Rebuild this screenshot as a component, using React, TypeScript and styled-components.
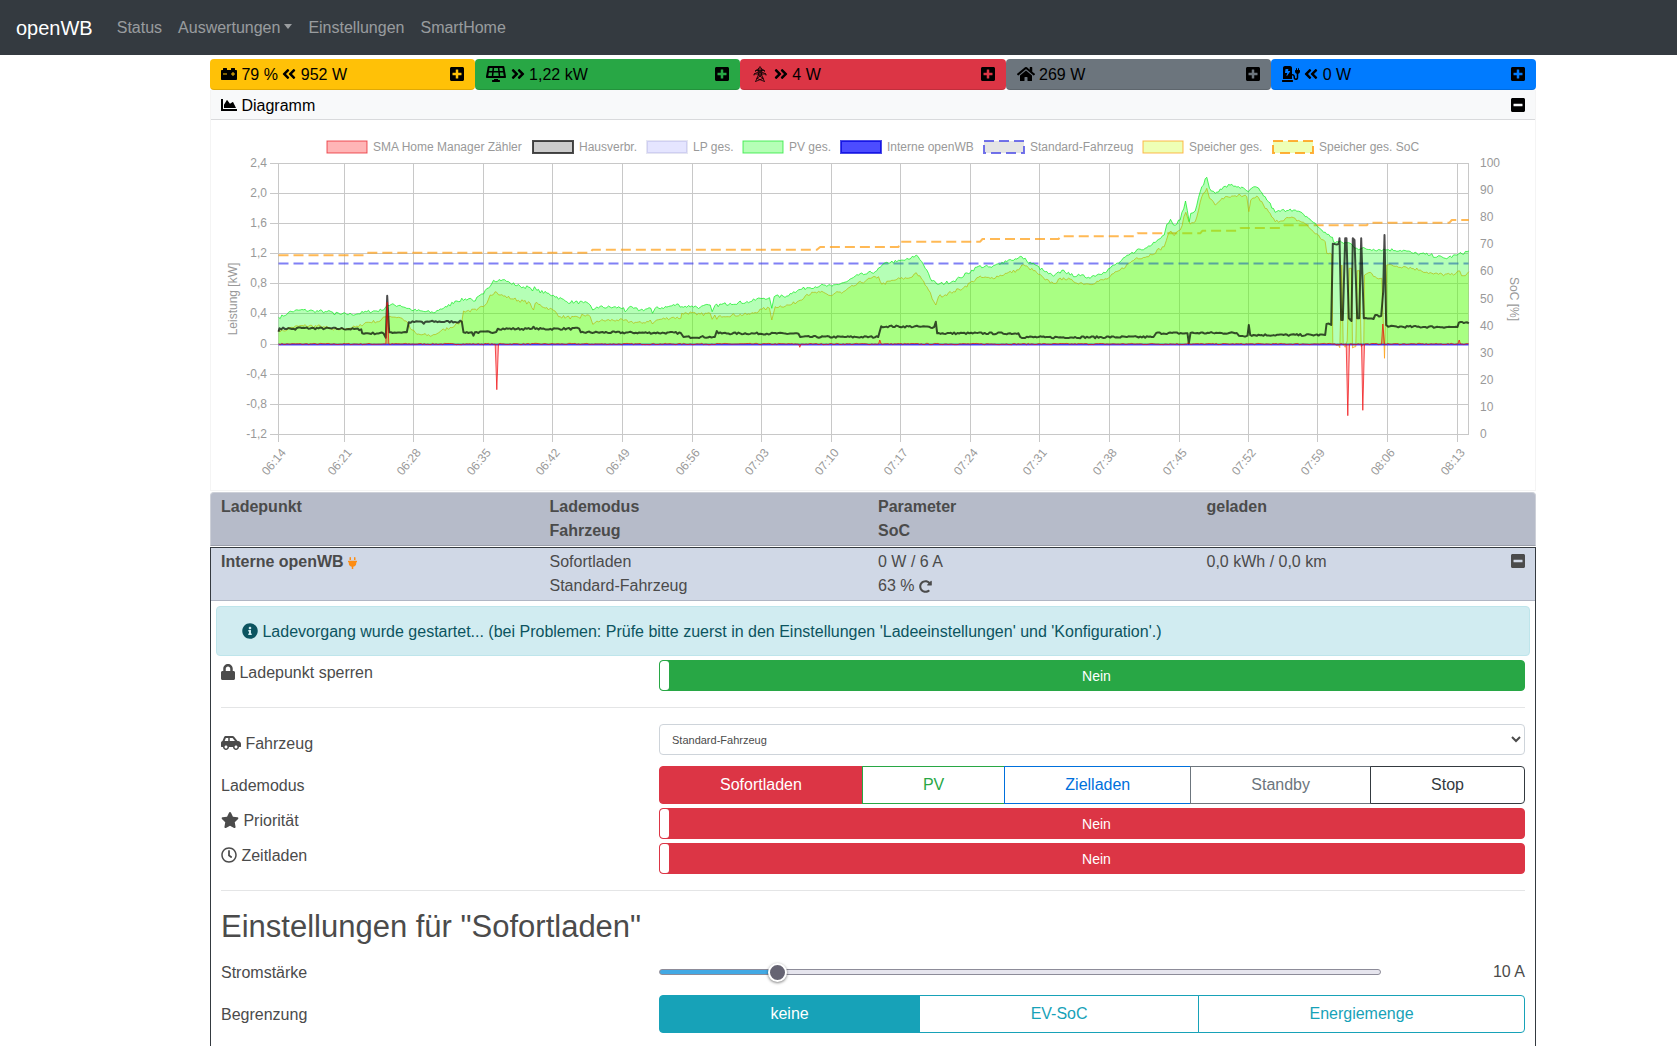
import React, { useId, useState } from "react";
import styled, { createGlobalStyle } from "styled-components";
import type { IconType } from "react-icons";
import {
  FaAngleDoubleLeft,
  FaAngleDoubleRight,
  FaCarBattery,
  FaCarSide,
  FaChargingStation,
  FaChartArea,
  FaHome,
  FaInfoCircle,
  FaLock,
  FaMinusSquare,
  FaPlug,
  FaPlusSquare,
  FaRedoAlt,
  FaRegClock,
  FaSolarPanel,
  FaStar,
} from "react-icons/fa";

const GlobalStyle = createGlobalStyle`
  *, *::before, *::after { box-sizing: border-box; }
  body {
    margin: 0;
    background: #fff;
    color: #4b4b4b;
    font: 16px/24px "Liberation Sans", Arial, sans-serif;
  }
  button, input, select { font: inherit; color: inherit; }
`;

const glyph = (icon: IconType, width: number, height = 16) => styled(icon)`
  width: ${width}px;
  height: ${height}px;
  vertical-align: -2px;
`;

const BatteryIcon = glyph(FaCarBattery, 16);
const SolarIcon = glyph(FaSolarPanel, 20);
const LeftIcon = glyph(FaAngleDoubleLeft, 14);
const RightIcon = glyph(FaAngleDoubleRight, 14);
const HomeIcon = glyph(FaHome, 18);
const StationIcon = glyph(FaChargingStation, 18);
const PlusIcon = glyph(FaPlusSquare, 14);
const MinusIcon = glyph(FaMinusSquare, 14);
const AreaIcon = glyph(FaChartArea, 16);
const InfoIcon = glyph(FaInfoCircle, 16);
const LockIcon = glyph(FaLock, 14);
const CarIcon = glyph(FaCarSide, 20);
const StarIcon = glyph(FaStar, 18);
const ClockIcon = glyph(FaRegClock, 16);
const PlugIcon = glyph(FaPlug, 9, 12);
const ReloadIcon = glyph(FaRedoAlt, 13, 13);

const Page = styled.div`
  display: flex;
  flex-direction: column;
  min-height: 100vh;
`;

const Navbar = styled.nav`
  display: flex;
  align-items: center;
  gap: 16px;
  height: 55px;
  padding: 0 16px;
  background: #343a40;
`;

const Brand = styled.a`
  margin-right: 8px;
  color: #fff;
  font-size: 20px;
  line-height: 30px;
  text-decoration: none;
`;

const NavLink = styled.a`
  color: rgba(255, 255, 255, 0.5);
  text-decoration: none;
`;

const NavMenu = styled.button`
  padding: 0;
  border: 0;
  background: none;
  color: rgba(255, 255, 255, 0.5);

  &::after {
    content: "";
    display: inline-block;
    margin-left: 4px;
    vertical-align: 4px;
    border: 4px solid transparent;
    border-top: 5px solid currentColor;
    border-bottom: 0;
  }
`;

const Main = styled.main`
  display: flex;
  flex-direction: column;
  flex: 1;
  padding: 4px 141px 0 210px;
`;

const Summary = styled.div`
  display: grid;
  grid-template-columns: repeat(5, 1fr);
`;

const Tile = styled.section<{ $color: string }>`
  display: flex;
  justify-content: space-between;
  padding: 3px 10px 2px;
  border: 1px solid transparent;
  border-bottom-color: rgba(0, 0, 0, 0.12);
  border-radius: 4px;
  background: ${(p) => p.$color};
  color: #000;
`;

const IconButton = styled.button`
  display: block;
  height: 24px;
  padding: 0;
  border: 0;
  background: none;
`;

const ChartCard = styled.section`
  margin-bottom: 1px;
  border: 1px solid #f4f4f4;
  border-top: 0;
`;

const ChartHeader = styled.header`
  display: flex;
  justify-content: space-between;
  padding: 4px 10px 1px;
  border-bottom: 1px solid #d9dadc;
  background: #f8f9fa;
  color: #000;
`;

const ChartSvg = styled.svg`
  display: block;
  width: 100%;
  height: auto;
  font-size: 12px;
  fill: #999;
`;

const TitleCard = styled.div`
  margin-bottom: 1px;
  border: 1px solid #cdd0d8;
  border-bottom-color: #9a9eaa;
  border-radius: 4px 4px 0 0;
  background: #b6bbc9;
  font-weight: bold;
`;

const ChargeCard = styled.section`
  flex: 1;
  border: 1px solid #343a40;
  border-bottom: 0;
`;

const ChargeHeader = styled.header`
  border-bottom: 1px solid #b0b6c4;
  background: #d0d8e6;
`;

const Columns = styled.div`
  display: grid;
  grid-template-columns: repeat(4, 1fr);
  padding: 2px 5px;
`;

const Column = styled.div<{ $bold?: boolean }>`
  padding: 0 5px;
  font-weight: ${(p) => (p.$bold ? "bold" : "inherit")};
`;

const SplitColumn = styled(Column)`
  display: flex;
  justify-content: space-between;
  align-items: flex-start;
`;

const PlugState = styled.span`
  color: #fd8d14;
  font-weight: normal;
`;

const Reload = styled.button`
  padding: 0;
  border: 0;
  background: none;
`;

const ChargeBody = styled.div`
  padding: 5px;
`;

const Alert = styled.div`
  padding: 13px 25px 11px;
  border: 1px solid #bee5eb;
  border-radius: 4px;
  background: #d1ecf1;
  color: #0c5460;
`;

const Row = styled.div<{ $top?: number; $center?: boolean }>`
  display: grid;
  grid-template-columns: 1fr 2fr;
  align-items: ${(p) => (p.$center ? "center" : "start")};
  margin-top: ${(p) => p.$top ?? 4}px;

  & > * { margin: 0 5px; }
`;

const FieldLabel = styled.label<{ $drop?: boolean }>`
  padding-top: ${(p) => (p.$drop ? 8 : 1)}px;
`;

const Rule = styled.hr`
  margin: 16px 5px;
  border: 0;
  border-top: 1px solid #e4e5e6;
`;

const ToggleBox = styled.label<{ $color: string }>`
  position: relative;
  display: flex;
  height: 31px;
  overflow: hidden;
  border: 1px solid ${(p) => p.$color};
  border-radius: 4px;
  background: ${(p) => p.$color};
  color: #fff;
  font-size: 14px;
  line-height: 30px;
  text-align: center;
  cursor: pointer;
`;

const ToggleInput = styled.input`
  position: absolute;
  inset: 0;
  width: 100%;
  height: 100%;
  margin: 0;
  opacity: 0;
`;

const ToggleHandle = styled.span`
  width: 9px;
  border-radius: 3px;
  background: #fff;
`;

const ToggleText = styled.span`
  flex: 1;
`;

const Select = styled.select`
  height: 31px;
  padding: 0 8px;
  border: 1px solid #ced4da;
  border-radius: 4px;
  background: #fff;
  font-size: 11px;
`;

const ButtonGroup = styled.div`
  display: flex;
`;

const ModeButton = styled.button<{ $color: string; $active?: boolean }>`
  flex: 1 1 auto;
  height: 38px;
  padding: 0 12px;
  border: 1px solid ${(p) => p.$color};
  background: ${(p) => (p.$active ? p.$color : "#fff")};
  color: ${(p) => (p.$active ? "#fff" : p.$color)};

  & + & { margin-left: -1px; }
  &:first-child { border-radius: 4px 0 0 4px; }
  &:last-child { border-radius: 0 4px 4px 0; }
`;

const Heading = styled.h2`
  margin: 0 5px;
  padding-top: 1px;
  font-size: 31px;
  font-weight: normal;
  line-height: 38px;
`;

const SliderRow = styled.div`
  display: grid;
  grid-template-columns: 5fr 1fr;
  align-items: center;
  height: 30px;
`;

const Slider = styled.input<{ $fill: number }>`
  appearance: none;
  width: 100%;
  height: 6px;
  margin: 0;
  border: 1px solid #8d8c99;
  border-radius: 3px;
  background: linear-gradient(to right, #42a9e4 ${(p) => p.$fill}%, #e6e5ee ${(p) => p.$fill}%);

  &::-webkit-slider-thumb {
    appearance: none;
    width: 19px;
    height: 19px;
    border: 2px solid #fff;
    border-radius: 50%;
    background: #666473;
    box-shadow: 0 1px 3px rgba(0, 0, 0, 0.5);
  }
`;

const SliderValue = styled.output`
  text-align: right;
`;

/* ---------- chart ---------- */

type Point = [number, number];

// Samples are [time, power]; three units of either make one chart pixel.
const LEFT = 67.5;
const RIGHT = 1257.5;
const ZERO = 224;

const pv: Point[] = [
  [0, 80], [15, 84], [30, 95], [65, 102], [105, 99], [145, 97], [163, 95], [168, 87], [173, 95], [185, 89], [235, 90],
  [265, 97], [310, 101], [327, 117], [365, 116], [405, 101], [465, 94], [485, 105], [505, 111], [530, 129], [575, 137],
  [585, 129], [615, 150], [645, 191], [673, 193], [695, 183], [725, 173], [755, 169], [762, 159], [768, 172], [775, 161],
  [825, 146], [865, 127], [915, 124], [935, 117], [943, 102], [955, 111], [1035, 109], [1040, 97], [1050, 109],
  [1085, 102], [1117, 107], [1122, 92], [1130, 107], [1165, 111], [1200, 119], [1210, 112], [1240, 114], [1265, 110],
  [1295, 117], [1301, 97], [1309, 115], [1355, 122], [1415, 127], [1445, 137], [1473, 139], [1480, 107], [1487, 142],
  [1525, 144], [1545, 157], [1585, 169], [1625, 175], [1660, 173], [1690, 183], [1705, 187], [1740, 207], [1765, 210],
  [1795, 220], [1825, 245], [1855, 247], [1895, 255], [1913, 267], [1930, 247], [1945, 222], [1960, 189], [1980, 179],
  [2025, 189], [2045, 199], [2100, 233], [2140, 230], [2170, 245], [2190, 252], [2215, 255], [2230, 262], [2245, 249],
  [2270, 237], [2300, 217], [2325, 203], [2355, 222], [2375, 207], [2405, 205], [2430, 200], [2475, 215], [2525, 247],
  [2575, 283], [2595, 283], [2625, 305], [2657, 327], [2665, 359], [2676, 374], [2685, 357], [2705, 372], [2721, 429],
  [2732, 367], [2737, 392], [2750, 399], [2770, 472], [2785, 500], [2793, 467], [2810, 452], [2825, 465], [2855, 477],
  [2880, 472], [2910, 457], [2930, 472], [2945, 459], [2970, 427], [2990, 395], [3035, 405], [3075, 389], [3095, 374],
  [3115, 355], [3145, 329], [3162, 320], [3165, 307], [3215, 302], [3235, 287], [3285, 284], [3330, 283], [3375, 281],
  [3405, 272], [3455, 267], [3500, 257], [3535, 267], [3571, 279],
];

const storage: Point[] = [
  [0, 42], [15, 39], [35, 49], [75, 55], [135, 52], [165, 42], [205, 47], [240, 52], [260, 64], [305, 69], [325, 85],
  [365, 79], [383, 69], [395, 47], [415, 29], [460, 25], [485, 37], [530, 57], [550, 67], [555, 99], [595, 101],
  [620, 117], [635, 147], [650, 157], [665, 147], [705, 135], [755, 122], [765, 102], [770, 122], [825, 101], [845, 82],
  [905, 77], [910, 89], [935, 82], [943, 59], [955, 69], [1015, 72], [1055, 67], [1090, 62], [1115, 72], [1122, 60],
  [1135, 72], [1185, 80], [1207, 77], [1210, 92], [1240, 94], [1255, 87], [1295, 92], [1301, 74], [1309, 87], [1315, 74],
  [1325, 85], [1415, 89], [1450, 104], [1473, 107], [1480, 72], [1490, 112], [1535, 117], [1560, 129], [1585, 149],
  [1625, 155], [1660, 145], [1675, 157], [1690, 152], [1725, 174], [1765, 192], [1800, 202], [1810, 179], [1855, 194],
  [1895, 199], [1913, 214], [1930, 194], [1950, 162], [1972, 117], [1980, 142], [2025, 157], [2055, 169], [2100, 200],
  [2135, 197], [2185, 212], [2220, 222], [2230, 237], [2250, 229], [2275, 214], [2300, 192], [2325, 182], [2355, 199],
  [2385, 187], [2430, 180], [2485, 195], [2525, 222], [2575, 259], [2605, 262], [2657, 292], [2670, 332], [2677, 339],
  [2687, 325], [2705, 342], [2722, 395], [2735, 360], [2750, 367], [2770, 442], [2785, 467], [2793, 437], [2810, 417],
  [2830, 437], [2875, 442], [2882, 450], [2890, 442], [2905, 442], [2911, 397], [2917, 432], [2935, 444], [2955, 417],
  [2990, 367], [3035, 379], [3075, 365], [3105, 337], [3140, 307], [3145, 272], [3160, 267], [3163, 0], [3180, -4],
  [3184, -11], [3190, 237], [3194, 0], [3200, -10], [3206, 10], [3212, 227], [3219, 227], [3222, -12], [3232, -8],
  [3236, 220], [3243, 220], [3248, -8], [3256, 0], [3258, 207], [3275, 215], [3290, 202], [3310, 197], [3318, -43],
  [3325, 237], [3380, 232], [3425, 222], [3465, 210], [3525, 207], [3538, 219], [3555, 205], [3571, 217],
];

const house: Point[] = [
  [0, 37], [3, 47], [45, 46], [50, 43], [55, 48], [185, 46], [248, 44], [251, 32], [315, 32], [322, 19], [326, 145],
  [332, 35], [385, 35], [391, 65], [430, 67], [436, 61], [441, 67], [550, 67], [555, 35], [580, 35], [585, 25],
  [589, 35], [653, 36], [658, 46], [755, 45], [765, 52], [770, 45], [902, 46], [907, 35], [1207, 33], [1215, 21],
  [1309, 21], [1315, 39], [1320, 32], [1560, 31], [1565, 21], [1799, 21], [1808, 53], [1925, 52], [1967, 51],
  [1972, 67], [1976, 32], [2220, 32], [2225, 21], [2300, 20], [2625, 21], [2633, 33], [2727, 32], [2731, 2],
  [2736, 33], [2875, 33], [2881, 25], [2907, 25], [2911, 57], [2915, 27], [3140, 27], [3144, 60], [3158, 57],
  [3163, 301], [3181, 301], [3183, 317], [3188, 72], [3193, 72], [3200, 317], [3204, 317], [3211, 77], [3219, 69],
  [3223, 317], [3228, 312], [3236, 77], [3242, 77], [3248, 317], [3256, 77], [3285, 75], [3290, 87], [3308, 84],
  [3314, 157], [3318, 327], [3323, 57], [3329, 52], [3537, 51], [3541, 64], [3571, 62],
];

const grid: Point[] = [
  [0, 0], [322, 0], [326, 125], [331, 0], [650, 0], [655, -137], [660, 0], [1560, 0], [1564, -10], [1568, 0],
  [1800, 0], [1804, 12], [1808, 0], [2725, 0], [2729, 4], [2733, 0], [3203, 0], [3208, -215], [3213, 0], [3249, 0],
  [3253, -199], [3258, 0], [3309, 0], [3313, 60], [3318, 0], [3538, 0], [3542, 12], [3546, 0], [3571, 0],
];

const storageSoc: Point[] = [
  [0, 266], [255, 266], [262, 274], [935, 274], [942, 283], [1615, 283], [1625, 291], [1860, 291], [1866, 307],
  [2105, 307], [2112, 315], [2340, 315], [2347, 323], [2570, 323], [2577, 332], [2765, 332], [2772, 340], [2880, 340],
  [2887, 348], [3010, 348], [3017, 356], [3265, 356], [3272, 364], [3513, 364], [3520, 372], [3571, 372],
];

// Fills the time between two samples with small, repeatable fluctuations.
function toLine(points: Point[], jitter: number): string {
  let seed = 7;
  const random = () => {
    seed = (seed * 16807) % 2147483647;
    return seed / 2147483647 - 0.5;
  };
  const out: Point[] = [];
  points.forEach(([t, h], i) => {
    out.push([t, h]);
    const next = points[i + 1];
    if (!next || jitter === 0) return;
    const steps = Math.floor((next[0] - t) / 5);
    for (let s = 1; s < steps; s++) {
      const k = s / steps;
      out.push([t + (next[0] - t) * k, h + (next[1] - h) * k + random() * 2 * jitter]);
    }
  });
  return out.map(([t, h]) => `${(LEFT + t / 3).toFixed(1)},${(ZERO - h / 3).toFixed(1)}`).join(" L");
}

const closeArea = (line: string) => `M${LEFT},${ZERO} L${line} L${RIGHT},${ZERO} Z`;

const powerTicks: [string, number][] = [
  ["2,4", 43.5], ["2,0", 73.5], ["1,6", 103.5], ["1,2", 133.5], ["0,8", 163.5],
  ["0,4", 193.5], ["0", 224.5], ["-0,4", 254.5], ["-0,8", 284.5], ["-1,2", 314.5],
];

const timeTicks: [string, number][] = [
  ["06:14", 67.5], ["06:21", 133.5], ["06:28", 202.5], ["06:35", 272.5], ["06:42", 341.5], ["06:49", 411.5],
  ["06:56", 481.5], ["07:03", 550.5], ["07:10", 620.5], ["07:17", 689.5], ["07:24", 759.5], ["07:31", 828.5],
  ["07:38", 898.5], ["07:45", 968.5], ["07:52", 1037.5], ["07:59", 1106.5], ["08:06", 1176.5], ["08:13", 1246.5],
];

const legend = [
  { x: 116, text: "SMA Home Manager Zähler", fill: "rgba(255,10,13,0.3)", stroke: "rgba(230,20,30,0.7)", width: 1 },
  { x: 322, text: "Hausverbr.", fill: "rgba(0,0,0,0.2)", stroke: "rgba(0,0,0,0.7)", width: 2 },
  { x: 436, text: "LP ges.", fill: "rgba(0,0,255,0.1)", stroke: "rgba(50,50,150,0.12)", width: 2 },
  { x: 532, text: "PV ges.", fill: "rgba(10,255,13,0.3)", stroke: "rgba(20,230,40,0.7)", width: 1 },
  { x: 630, text: "Interne openWB", fill: "rgba(0,0,255,0.7)", stroke: "rgba(0,0,220,0.7)", width: 2 },
  { x: 773, text: "Standard-Fahrzeug", fill: "rgba(0,0,0,0.1)", stroke: "rgba(80,80,230,0.8)", width: 2, dash: true },
  { x: 932, text: "Speicher ges.", fill: "rgba(200,255,13,0.3)", stroke: "rgba(255,155,13,0.7)", width: 1 },
  { x: 1062, text: "Speicher ges. SoC", fill: "rgba(200,255,13,0.3)", stroke: "rgba(255,155,13,0.8)", width: 2, dash: true },
];

function PowerChart() {
  const pvLine = toLine(pv, 5);
  const storageLine = toLine(storage, 5);
  const gridLine = toLine(grid, 2);
  return (
    <ChartSvg viewBox="0 0 1324 370" role="img" aria-label="Leistungsdiagramm">
      {legend.map((item) => (
        <g key={item.text}>
          <rect
            x={item.x}
            y={21}
            width={40}
            height={12}
            fill={item.fill}
            stroke={item.stroke}
            strokeWidth={item.width}
            strokeDasharray={item.dash ? "10 5" : undefined}
          />
          <text x={item.x + 46} y={31}>{item.text}</text>
        </g>
      ))}

      <g stroke="#c8c8c8">
        {powerTicks.map(([label, y]) => (
          <path key={label} d={`M59,${y} H${RIGHT}`} />
        ))}
        {timeTicks.map(([label, x]) => (
          <path key={label} d={`M${x},43 V322`} />
        ))}
        <path d={`M${RIGHT},43 V315`} />
      </g>

      {powerTicks.map(([label, y]) => (
        <text key={label} x={56} y={Math.round(y) + 3} textAnchor="end">{label}</text>
      ))}
      {timeTicks.map(([label, x]) => (
        <text key={label} transform={`translate(${x + 8} 333) rotate(-50)`} textAnchor="end">{label}</text>
      ))}
      {[100, 90, 80, 70, 60, 50, 40, 30, 20, 10, 0].map((soc, i) => (
        <text key={soc} x={1269} y={47 + Math.round(i * 27.1)}>{soc}</text>
      ))}
      <text transform="translate(26 179) rotate(-90)" textAnchor="middle">Leistung [kW]</text>
      <text transform="translate(1299 179) rotate(90)" textAnchor="middle">SoC [%]</text>

      <g fill="none" strokeLinejoin="round">
        <path d={`M${toLine(storageSoc, 0)}`} stroke="rgba(255,155,13,0.7)" strokeWidth={2} strokeDasharray="10 5" />
        <path d={closeArea(storageLine)} fill="rgba(200,255,13,0.3)" />
        <path d={`M${storageLine}`} stroke="rgba(255,155,13,0.7)" />
        <path d={`M${LEFT},143.5 H${RIGHT}`} stroke="rgba(60,60,240,0.65)" strokeWidth={2} strokeDasharray="10 5" />
        <path d={`M${LEFT},224.5 H${RIGHT}`} stroke="rgba(0,0,255,0.7)" strokeWidth={2} />
        <path d={closeArea(pvLine)} fill="rgba(10,255,13,0.3)" />
        <path d={`M${pvLine}`} stroke="rgba(10,235,30,0.7)" />
        <path d={`M${toLine(house, 3)}`} stroke="rgba(0,0,0,0.7)" strokeWidth={2} />
        <path d={closeArea(gridLine)} fill="rgba(255,10,13,0.3)" />
        <path d={`M${gridLine}`} stroke="rgba(240,10,13,0.7)" />
      </g>
    </ChartSvg>
  );
}

/* ---------- parts ---------- */

const PylonSvg = styled.svg`
  width: 18px;
  height: 16px;
  vertical-align: -2px;
`;

function PylonIcon() {
  return (
    <PylonSvg viewBox="0 0 18 16" fill="none" stroke="currentColor" strokeWidth="0.8">
      <path d="M7.3 3 9 .5 10.7 3M7.3 3v6L4.500 15.700M10.700 3v6l2.800 6.700M4.500 4.500 7.300 3h3.400l2.800 1.500zM4.500 4.500v1.300M13.500 4.500v1.300M3 8l4.300-2h3.400L15 8zM3 8v1.500M15 8v1.500M7.300 4.500l3.400 3.500M10.700 4.500 7.300 8M7.300 9h3.400M7.300 9l5 3.500M10.700 9l-5 3.500M5.700 12.300l7.800 3.200M12.300 12.300l-7.800 3.200" />
    </PylonSvg>
  );
}

function Toggle({ id, color }: { id: string; color: string }) {
  return (
    <ToggleBox $color={color}>
      <ToggleInput id={id} type="checkbox" />
      <ToggleHandle />
      <ToggleText>Nein</ToggleText>
    </ToggleBox>
  );
}

function Expand() {
  return (
    <IconButton type="button" aria-label="Details einblenden">
      <PlusIcon />
    </IconButton>
  );
}

function Collapse() {
  return (
    <IconButton type="button" aria-label="Details ausblenden">
      <MinusIcon />
    </IconButton>
  );
}

const modes = [
  { name: "Sofortladen", color: "#dc3545" },
  { name: "PV", color: "#28a745" },
  { name: "Zielladen", color: "#0070dc" },
  { name: "Standby", color: "#6c757d" },
  { name: "Stop", color: "#343a40" },
];

const limits = ["keine", "EV-SoC", "Energiemenge"];

export default function App() {
  const id = useId();
  const [mode, setMode] = useState("Sofortladen");
  const [limit, setLimit] = useState("keine");
  const [current, setCurrent] = useState(10);

  return (
    <Page>
      <GlobalStyle />
      <Navbar>
        <Brand href="#">openWB</Brand>
        <NavLink href="#status">Status</NavLink>
        <NavMenu type="button">Auswertungen</NavMenu>
        <NavLink href="#einstellungen">Einstellungen</NavLink>
        <NavLink href="#smarthome">SmartHome</NavLink>
      </Navbar>

      <Main>
        <Summary>
          <Tile $color="#ffc107">
            <span><BatteryIcon /> 79 % <LeftIcon /> 952 W</span>
            <Expand />
          </Tile>
          <Tile $color="#28a745">
            <span><SolarIcon /> <RightIcon /> 1,22 kW</span>
            <Expand />
          </Tile>
          <Tile $color="#dc3545">
            <span><PylonIcon /> <RightIcon /> 4 W</span>
            <Expand />
          </Tile>
          <Tile $color="#6c757d">
            <span><HomeIcon /> 269 W</span>
            <Expand />
          </Tile>
          <Tile $color="#007bff">
            <span><StationIcon /> <LeftIcon /> 0 W</span>
            <Expand />
          </Tile>
        </Summary>

        <ChartCard>
          <ChartHeader>
            <span><AreaIcon /> Diagramm</span>
            <Collapse />
          </ChartHeader>
          <PowerChart />
        </ChartCard>

        <TitleCard>
          <Columns>
            <Column>Ladepunkt</Column>
            <Column>Lademodus<br />Fahrzeug</Column>
            <Column>Parameter<br />SoC</Column>
            <Column>geladen</Column>
          </Columns>
        </TitleCard>

        <ChargeCard>
          <ChargeHeader>
            <Columns>
              <Column $bold>
                Interne openWB <PlugState><PlugIcon /></PlugState>
              </Column>
              <Column>Sofortladen<br />Standard-Fahrzeug</Column>
              <Column>
                0 W / 6 A<br />63 %{" "}
                <Reload type="button" aria-label="SoC aktualisieren"><ReloadIcon /></Reload>
              </Column>
              <SplitColumn>
                <span>0,0 kWh / 0,0 km</span>
                <Collapse />
              </SplitColumn>
            </Columns>
          </ChargeHeader>

          <ChargeBody>
            <Alert role="status">
              <InfoIcon /> Ladevorgang wurde gestartet... (bei Problemen: Prüfe bitte zuerst in den
              Einstellungen 'Ladeeinstellungen' und 'Konfiguration'.)
            </Alert>
            <Row>
              <FieldLabel htmlFor={`${id}-lock`}><LockIcon /> Ladepunkt sperren</FieldLabel>
              <Toggle id={`${id}-lock`} color="#28a745" />
            </Row>
            <Rule />
            <Row $top={0}>
              <FieldLabel $drop htmlFor={`${id}-car`}><CarIcon /> Fahrzeug</FieldLabel>
              <Select id={`${id}-car`}>
                <option>Standard-Fahrzeug</option>
              </Select>
            </Row>
            <Row $top={10} $center>
              <FieldLabel as="span" id={`${id}-mode`}>Lademodus</FieldLabel>
              <ButtonGroup role="group" aria-labelledby={`${id}-mode`}>
                {modes.map((m) => (
                  <ModeButton
                    key={m.name}
                    type="button"
                    $color={m.color}
                    $active={m.name === mode}
                    aria-pressed={m.name === mode}
                    onClick={() => setMode(m.name)}
                  >
                    {m.name}
                  </ModeButton>
                ))}
              </ButtonGroup>
            </Row>
            <Row>
              <FieldLabel htmlFor={`${id}-prio`}><StarIcon /> Priorität</FieldLabel>
              <Toggle id={`${id}-prio`} color="#dc3545" />
            </Row>
            <Row>
              <FieldLabel htmlFor={`${id}-time`}><ClockIcon /> Zeitladen</FieldLabel>
              <Toggle id={`${id}-time`} color="#dc3545" />
            </Row>
            <Rule />
            <Heading>Einstellungen für "Sofortladen"</Heading>
            <Row $top={11} $center>
              <FieldLabel htmlFor={`${id}-current`}>Stromstärke</FieldLabel>
              <SliderRow>
                <Slider
                  id={`${id}-current`}
                  type="range"
                  min={6}
                  max={32}
                  value={current}
                  $fill={((current - 6) / 26) * 100}
                  onChange={(e) => setCurrent(Number(e.target.value))}
                />
                <SliderValue htmlFor={`${id}-current`}>{current} A</SliderValue>
              </SliderRow>
            </Row>
            <Row $top={8} $center>
              <FieldLabel as="span" id={`${id}-limit`}>Begrenzung</FieldLabel>
              <ButtonGroup role="group" aria-labelledby={`${id}-limit`}>
                {limits.map((name) => (
                  <ModeButton
                    key={name}
                    type="button"
                    $color="#17a2b8"
                    $active={name === limit}
                    aria-pressed={name === limit}
                    onClick={() => setLimit(name)}
                  >
                    {name}
                  </ModeButton>
                ))}
              </ButtonGroup>
            </Row>
          </ChargeBody>
        </ChargeCard>
      </Main>
    </Page>
  );
}
